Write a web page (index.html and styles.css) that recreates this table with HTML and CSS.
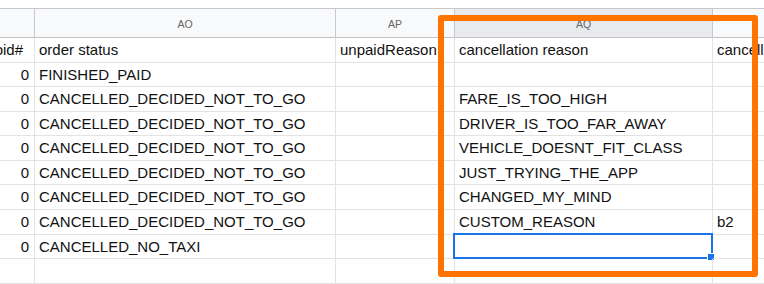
FILE: index.html
```html
<!DOCTYPE html>
<html lang="en">
<head>
<meta charset="utf-8">
<title>orders sheet</title>
<link rel="stylesheet" href="styles.css">
</head>
<body>
<div class="sheet">
  <div class="grid">
    <div class="hd"></div>
    <div class="hd">AO</div>
    <div class="hd">AP</div>
    <div class="hd hd-sel">AQ</div>
    <div class="hd"></div>

    <div class="c clip-left"><span>oid#</span></div>
    <div class="c">order status</div>
    <div class="c">unpaidReason</div>
    <div class="c">cancellation reason</div>
    <div class="c">cancellation comment</div>

    <div class="c num">0</div>
    <div class="c">FINISHED_PAID</div>
    <div class="c"></div>
    <div class="c"></div>
    <div class="c"></div>

    <div class="c num">0</div>
    <div class="c">CANCELLED_DECIDED_NOT_TO_GO</div>
    <div class="c"></div>
    <div class="c">FARE_IS_TOO_HIGH</div>
    <div class="c"></div>

    <div class="c num">0</div>
    <div class="c">CANCELLED_DECIDED_NOT_TO_GO</div>
    <div class="c"></div>
    <div class="c">DRIVER_IS_TOO_FAR_AWAY</div>
    <div class="c"></div>

    <div class="c num">0</div>
    <div class="c">CANCELLED_DECIDED_NOT_TO_GO</div>
    <div class="c"></div>
    <div class="c">VEHICLE_DOESNT_FIT_CLASS</div>
    <div class="c"></div>

    <div class="c num">0</div>
    <div class="c">CANCELLED_DECIDED_NOT_TO_GO</div>
    <div class="c"></div>
    <div class="c">JUST_TRYING_THE_APP</div>
    <div class="c"></div>

    <div class="c num">0</div>
    <div class="c">CANCELLED_DECIDED_NOT_TO_GO</div>
    <div class="c"></div>
    <div class="c">CHANGED_MY_MIND</div>
    <div class="c"></div>

    <div class="c num">0</div>
    <div class="c">CANCELLED_DECIDED_NOT_TO_GO</div>
    <div class="c"></div>
    <div class="c">CUSTOM_REASON</div>
    <div class="c">b2</div>

    <div class="c num">0</div>
    <div class="c">CANCELLED_NO_TAXI</div>
    <div class="c"></div>
    <div class="c active"><span class="sel"><span class="handle"></span></span></div>
    <div class="c"></div>

    <div class="c"></div>
    <div class="c"></div>
    <div class="c"></div>
    <div class="c"></div>
    <div class="c"></div>
  </div>
  <div class="highlight"></div>
</div>
</body>
</html>
```

FILE: styles.css
```css
html, body {
  margin: 0;
  padding: 0;
  background: #ffffff;
  overflow: hidden;
}

body {
  width: 764px;
  height: 284px;
  font-family: "Liberation Sans", Arial, sans-serif;
  color: #111;
}

.sheet {
  position: relative;
  padding-top: 8px;
}

.grid {
  display: grid;
  grid-template-columns: 35px 301px 119px 258px 120px;
  grid-template-rows: 29px 25px 24px 25px 24px 25px 24px 25px 25px 24px 25px;
  border-top: 1px solid #c8c8c8;
  width: 833px;
}

.hd {
  box-sizing: border-box;
  background: #f8f9fa;
  border-right: 1px solid #c9c9c9;
  border-bottom: 1px solid #c4c4c4;
  font-size: 10.5px;
  color: #666;
  display: flex;
  align-items: center;
  justify-content: center;
  padding-top: 1px;
}

.hd-sel {
  background: #e8eaed;
}

.c {
  box-sizing: border-box;
  border-right: 1px solid #e2e3e3;
  border-bottom: 1px solid #e2e3e3;
  font-size: 15px;
  line-height: 24px;
  padding: 0 4px 0 4px;
  white-space: nowrap;
  overflow: hidden;
  position: relative;
}

.num {
  text-align: right;
  padding-right: 5px;
}

/* header of the numeric column: wider than the column, spills off the left side */
.clip-left {
  display: flex;
  justify-content: flex-end;
  padding-right: 11px;
  overflow: visible;
}

.active {
  overflow: visible;
}

.sel {
  position: absolute;
  left: -2px;
  top: -2px;
  right: -1px;
  bottom: -1px;
  border: 2px solid #1a73e8;
}

.handle {
  position: absolute;
  right: -4px;
  bottom: -4px;
  width: 6px;
  height: 6px;
  background: #1a73e8;
  border: 1px solid #fff;
}

.highlight {
  position: absolute;
  left: 438px;
  top: 15px;
  width: 308px;
  height: 250px;
  border: 6px solid #ff7300;
  border-radius: 3px;
}
```
